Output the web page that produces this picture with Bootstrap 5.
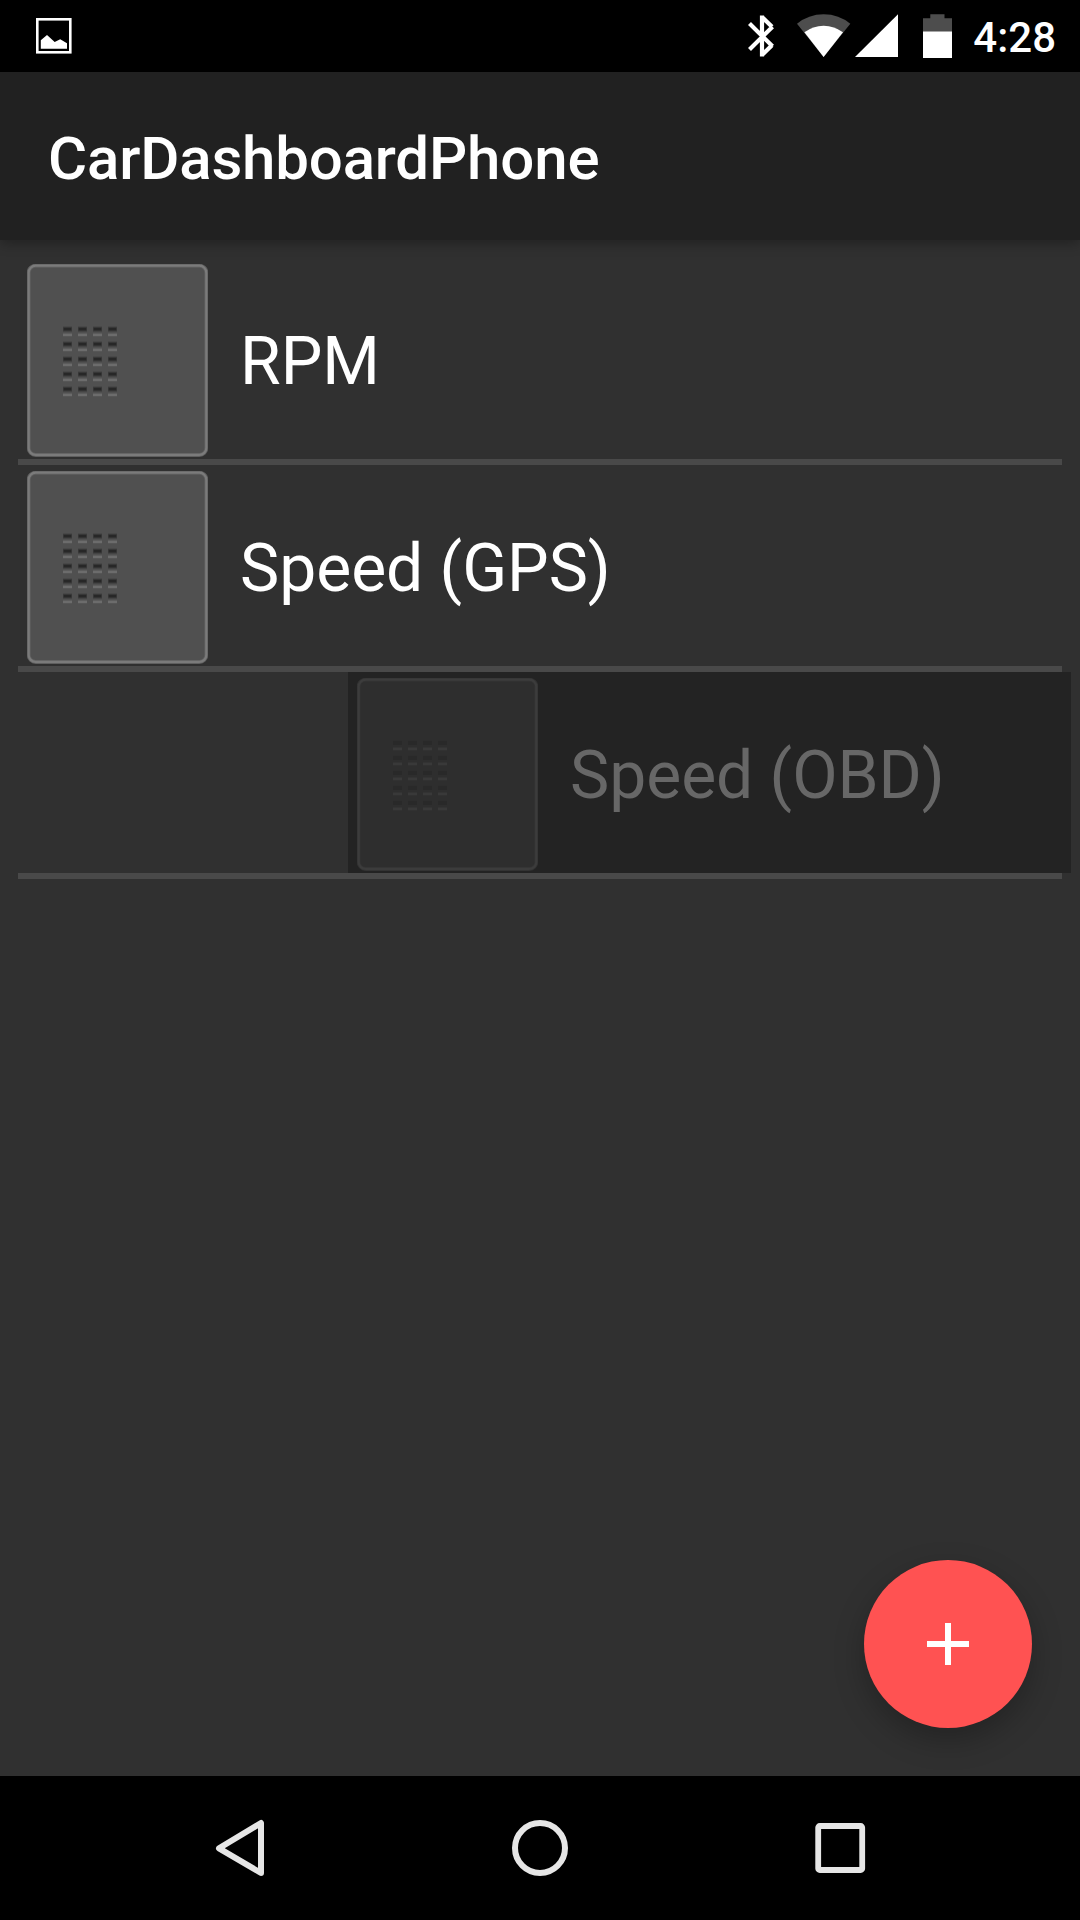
<!DOCTYPE html>
<html lang="en" data-bs-theme="dark">
<head>
<meta charset="utf-8">
<meta name="viewport" content="width=device-width, initial-scale=1">
<title>CarDashboardPhone</title>
<link href="https://cdn.jsdelivr.net/npm/bootstrap@5.3.0/dist/css/bootstrap.min.css" rel="stylesheet">
<style>
body { font-family: Roboto, "Noto Sans", sans-serif; background: #303030; color: #fff; }
svg { display: block; flex: none; }
.screen { width: 1080px; height: 1920px; background: #303030; }
.status-bar { height: 72px; background: #000; padding: 0 24px 0 36px; }
.status-icons { padding-top: 14px; height: 72px; }
.photo-icon { margin-top: 18px; }
.wifi-icon { margin-left: 22px; }
.cell-icon { margin-left: 4px; }
.battery-icon { margin-left: 25px; }
.clock { font-size: 42px; font-weight: 500; line-height: 72px; margin-left: 21px; padding-top: 2px; }
.app-bar { height: 168px; background: #212121; padding: 0 48px; z-index: 1; box-shadow: 0 3px 12px rgba(0,0,0,.32); }
.app-title { font-size: 60px; font-weight: 500; line-height: 72px; padding-top: 6px; letter-spacing: -.17px; }
.gauge-list { padding: 18px 18px 0; }
.gauge-row { height: 207px; border-bottom: 6px solid #494949; }
.gauge-item { height: 201px; padding: 6px 9px 3px; }
.gauge-item.swiped { margin-left: 330px; margin-right: -9px; background: #232323; }
.gauge-item.swiped .gauge-name { color: #676767; }
.gauge-name { font-size: 66px; line-height: 78px; margin-left: 32px; padding-top: 4px; white-space: nowrap; letter-spacing: -.04px; }
.fab { right: 48px; bottom: 48px; width: 168px; height: 168px; background: #ff5252; box-shadow: 0 12px 30px rgba(0,0,0,.26); }
.nav-keys { height: 144px; background: #000; padding: 0 210px; }
.nav-key { width: 60px; height: 60px; }
</style>
<script src="https://cdn.jsdelivr.net/npm/bootstrap@5.3.0/dist/js/bootstrap.bundle.min.js"></script>
</head>
<body>
<svg width="0" height="0" class="position-absolute" aria-hidden="true">
  <defs>
    <pattern id="dashes" x="36" y="62" width="15" height="15" patternUnits="userSpaceOnUse">
      <rect x="0" y="0.6" width="9" height="5" fill="#3b3b3b"/>
      <rect x="0.7" y="1.8" width="7.6" height="2.6" fill="#272727"/>
      <rect x="0" y="7.6" width="9" height="2.6" fill="#6c6c6c"/>
    </pattern>
    <pattern id="dashes-dim" x="36" y="62" width="15" height="15" patternUnits="userSpaceOnUse">
      <rect x="0" y="0.6" width="9" height="4.6" fill="#292929"/>
      <rect x="0" y="7.6" width="9" height="2.6" fill="#393939"/>
    </pattern>
    <symbol id="tile" viewBox="0 0 181 193">
      <rect x="1.7" y="1.7" width="177.6" height="189.2" rx="7" fill="#505050" stroke="#5f5f5f" stroke-width="4"/>
      <rect x="1.7" y="1.7" width="177.6" height="189.2" rx="7" fill="none" stroke="#7b7b7b" stroke-width="2.2"/>
      <rect x="36" y="62" width="54" height="75" fill="url(#dashes)"/>
    </symbol>
    <symbol id="tile-dim" viewBox="0 0 181 193">
      <rect x="1.7" y="1.7" width="177.6" height="189.2" rx="7" fill="#2e2e2e" stroke="#333" stroke-width="4"/>
      <rect x="1.7" y="1.7" width="177.6" height="189.2" rx="7" fill="none" stroke="#3c3c3c" stroke-width="2.2"/>
      <rect x="36" y="62" width="54" height="75" fill="url(#dashes-dim)"/>
    </symbol>
  </defs>
</svg>
<div class="screen d-flex flex-column overflow-hidden">
  <header class="status-bar d-flex justify-content-between">
    <svg class="photo-icon" width="36" height="36" viewBox="0 0 36 36">
      <rect x="1.3" y="1.3" width="33" height="33" fill="none" stroke="#fff" stroke-width="2.6"/>
      <path d="M4.8 22.2 11 17.1 18.7 24 24.2 21.3 31 25.3V30.8H4.8Z" fill="#fff"/>
    </svg>
    <div class="d-flex">
      <div class="status-icons d-flex">
        <svg width="27" height="44" viewBox="0 0 27 44">
          <path d="M1.5 9.5 24.5 32.3M1.5 35.5 24.5 12.7M14 1.5V42.5M14 3 24 12.8M14 41 24 31.2" fill="none" stroke="#fff" stroke-width="4.2"/>
        </svg>
        <svg class="wifi-icon" width="54" height="44" viewBox="0 0 54 44">
          <path d="M0 9.8Q11.5 .3 26.7 .3T53.3 9.8L26.6 42.9Z" fill="#4d4d4d"/>
          <path d="M7.4 18.3Q16 11.7 26.6 11.7T46 18.3L26.6 42.9Z" fill="#fff"/>
        </svg>
        <svg class="cell-icon" width="43" height="44" viewBox="0 0 43 44"><path d="M0 43 43 .3V43Z" fill="#fff"/></svg>
        <svg class="battery-icon" width="29" height="44" viewBox="0 0 29 44">
          <path d="M0 18V4.3H7.3V.3H21.5V4.3H29V18Z" fill="#4d4d4d"/>
          <path d="M0 17.5H29V44H0Z" fill="#fff"/>
        </svg>
      </div>
      <div class="clock">4:28</div>
    </div>
  </header>

  <nav class="app-bar d-flex align-items-center position-relative">
    <h1 class="app-title m-0">CarDashboardPhone</h1>
  </nav>

  <main class="flex-grow-1 position-relative">
    <div class="gauge-list">
      <div class="gauge-row"><div class="gauge-item d-flex align-items-center">
        <svg width="181" height="193"><use href="#tile"/></svg><div class="gauge-name">RPM</div>
      </div></div>
      <div class="gauge-row"><div class="gauge-item d-flex align-items-center">
        <svg width="181" height="193"><use href="#tile"/></svg><div class="gauge-name">Speed (GPS)</div>
      </div></div>
      <div class="gauge-row"><div class="gauge-item swiped d-flex align-items-center">
        <svg width="181" height="193"><use href="#tile-dim"/></svg><div class="gauge-name">Speed (OBD)</div>
      </div></div>
    </div>
    <button class="fab btn rounded-circle border-0 p-0 position-absolute d-flex align-items-center justify-content-center" type="button" aria-label="Add">
      <svg width="42" height="42" viewBox="0 0 42 42"><path d="M18 0h6v18h18v6H24v18h-6V24H0v-6h18Z" fill="#fff"/></svg>
    </button>
  </main>

  <footer class="nav-keys d-flex align-items-center justify-content-between">
    <svg class="nav-key" viewBox="0 0 60 60"><path d="M51 5V55L9 30.3Z" fill="none" stroke="#e6e6e6" stroke-width="6" stroke-linejoin="round"/></svg>
    <svg class="nav-key" viewBox="0 0 60 60"><circle cx="30" cy="30" r="25" fill="none" stroke="#e6e6e6" stroke-width="6"/></svg>
    <svg class="nav-key" viewBox="0 0 60 60"><rect x="8.2" y="8" width="44" height="44" rx="1.5" fill="none" stroke="#e6e6e6" stroke-width="5.8"/></svg>
  </footer>
</div>
</body>
</html>
